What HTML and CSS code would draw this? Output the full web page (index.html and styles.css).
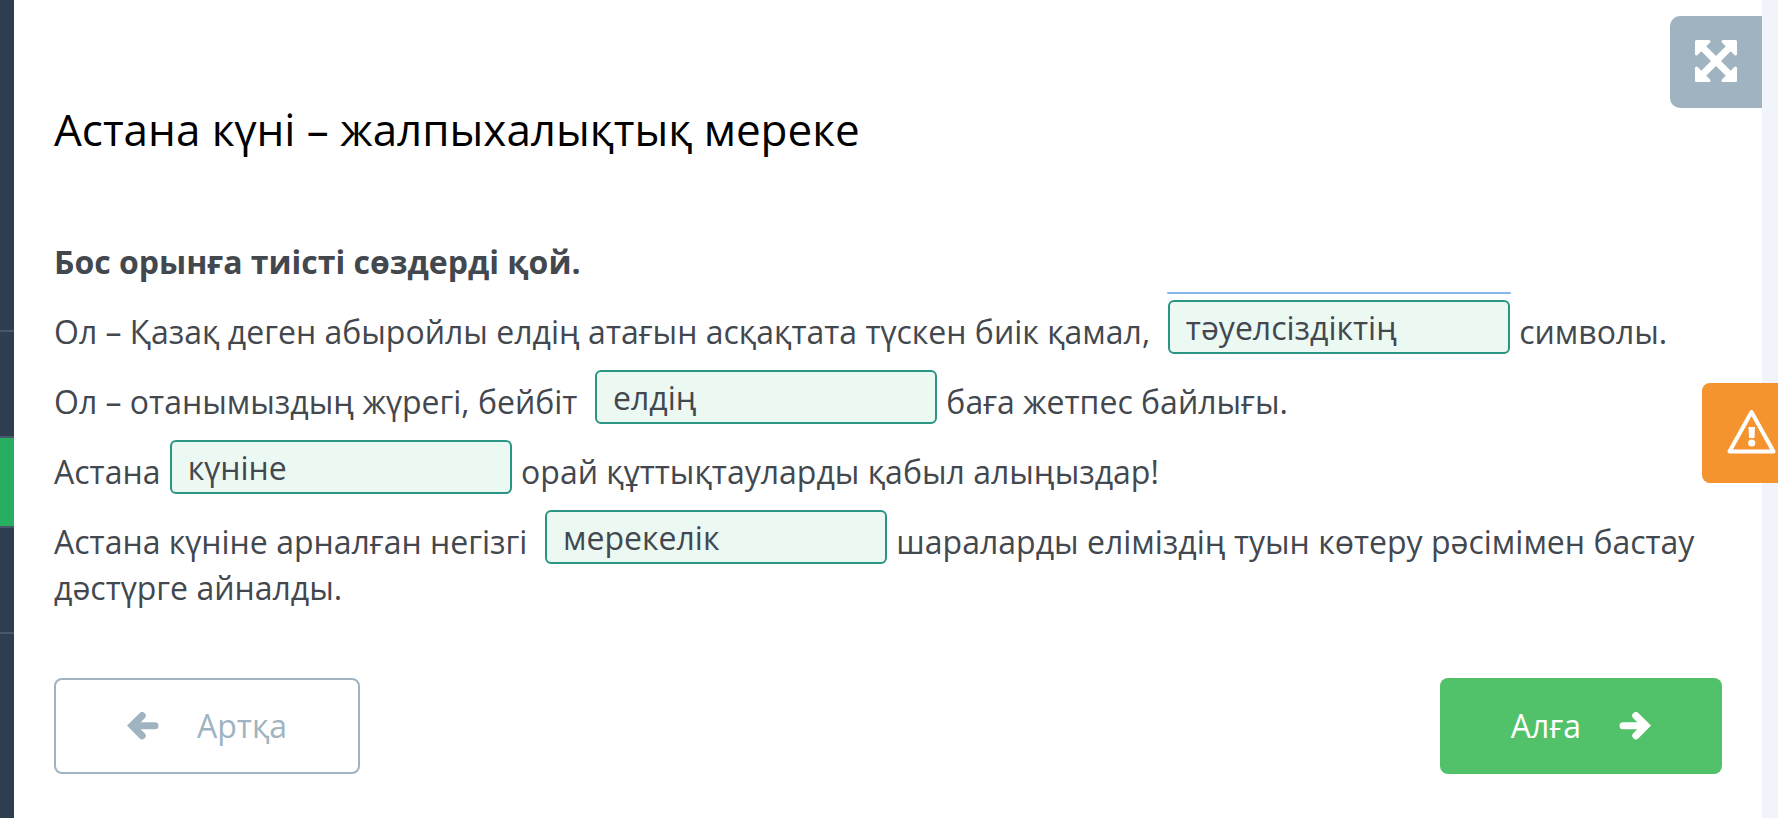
FILE: index.html
```html
<!DOCTYPE html>
<html lang="kk">
<head>
    <meta charset="UTF-8">
    <meta name="viewport" content="width=device-width, initial-scale=1.0">
    <title>Астана күні – жалпыхалықтық мереке</title>
    <link rel="stylesheet" href="styles.css">
</head>
<body>
    <aside class="sidebar">
        <div class="sidebar-item first"></div>
        <div class="sidebar-item"></div>
        <div class="sidebar-item active"></div>
        <div class="sidebar-item"></div>
    </aside>

    <main class="lesson">
        <button type="button" class="fullscreen-btn" aria-label="Толық экран">
            <svg width="42" height="42" viewBox="0 0 42 42">
                <path d="M8 8L34 34M34 8L8 34" stroke="currentColor" stroke-width="7"/>
                <path d="M1.500 1.500H14L1.500 14zM40.500 1.500H28L40.500 14zM1.500 40.500H14L1.500 28zM40.500 40.500H28L40.500 28z" fill="currentColor" stroke="currentColor" stroke-width="3" stroke-linejoin="round"/>
            </svg>
        </button>

        <h1>Астана күні – жалпыхалықтық мереке</h1>

        <form class="task" id="task">
            <p><strong>Бос орынға тиісті сөздерді қой.</strong></p>
            <p>Ол – Қазақ деген абыройлы елдің атағын асқақтата түскен биік қамал,&nbsp; <span class="blank open"><input type="text" aria-label="1-сөз" value="тәуелсіздіктің"></span> символы.</p>
            <p>Ол – отанымыздың жүрегі, бейбіт&nbsp; <span class="blank"><input type="text" aria-label="2-сөз" value="елдің"></span> баға жетпес байлығы.</p>
            <p>Астана <span class="blank"><input type="text" aria-label="3-сөз" value="күніне"></span> орай құттықтауларды қабыл алыңыздар!</p>
            <p>Астана күніне арналған негізгі&nbsp; <span class="blank"><input type="text" aria-label="4-сөз" value="мерекелік"></span> шараларды еліміздің туын көтеру рәсімімен бастау дәстүрге айналды.</p>
        </form>

        <div class="nav-buttons">
            <button type="button" class="nav-btn back">
                <svg width="32" height="28" viewBox="0 0 32 28">
                    <path d="M0 13.5L12.5 1.2a3.6 3.6 0 0 1 5.2 5l-4 4H28a3.5 3.5 0 0 1 0 7H13.7l4 4a3.6 3.6 0 0 1-5.2 5z"/>
                </svg>
                Артқа
            </button>
            <button type="button" class="nav-btn next">
                Алға
                <svg width="32" height="28" viewBox="0 0 32 28">
                    <path d="M32 13.5L19.5 1.2a3.6 3.6 0 0 0-5.2 5l4 4H4a3.5 3.5 0 0 0 0 7H18.3l-4 4a3.6 3.6 0 0 0 5.2 5z"/>
                </svg>
            </button>
        </div>
    </main>

    <button type="button" class="report-btn" aria-label="Қате туралы хабарлау">
        <svg width="49" height="46" viewBox="0 0 49 46">
            <path d="M24.5 3L46.500 42.500H2.500z" fill="none" stroke="currentColor" stroke-width="4" stroke-linejoin="round"/>
            <path d="M21.500 18H28L27.500 29H22z" fill="currentColor"/>
            <circle cx="24.700" cy="34" r="3.600" fill="currentColor"/>
        </svg>
    </button>
</body>
</html>
```

FILE: styles.css
```css
:root {
    --text-color: #43484f;
    --muted-color: #9fb4c0;
    --green: #51c269;
    --answer-border: #2a9583;
    --answer-bg: #ecf9f3;
}
* {
    box-sizing: border-box;
}
body {
    margin: 0;
    min-height: 100vh;
    display: flex;
    padding-right: 16px;
    background-color: #f1f4fa;
    color: var(--text-color);
    font-family: 'Open Sans', sans-serif;
    font-size: 32px;
    line-height: 46px;
}
.sidebar {
    width: 14px;
    flex-shrink: 0;
    background-color: #2c3e50;
}
.sidebar-item {
    height: 106px;
    border-bottom: 2px solid #46586a;
}
.sidebar-item.first {
    height: 332px;
}
.sidebar-item.active {
    height: 90px;
    background-color: #27ae60;
}
.lesson {
    position: relative;
    flex: 1;
    padding: 99px 40px 44px;
    background-color: #fff;
}
h1 {
    margin: 0 0 80px;
    color: #000;
    font-size: 44px;
    font-weight: 400;
    line-height: 60px;
}
.task p {
    margin: 0 0 24px;
}
.blank {
    position: relative;
}
.blank input {
    width: 342px;
    height: 54px;
    margin: -12px 1px 0;
    padding: 2px 16px 0;
    border: 2px solid var(--answer-border);
    border-radius: 6px;
    background-color: var(--answer-bg);
    color: var(--text-color);
    font: inherit;
    vertical-align: 4px;
}
/* edge of the answer list above the current blank */
.blank.open::before {
    content: "";
    position: absolute;
    left: 0;
    top: -18px;
    width: 100%;
    height: 2px;
    border-radius: 2px;
    background-color: #86b7ec;
}
button {
    border: none;
    font: inherit;
    cursor: pointer;
}
.fullscreen-btn {
    position: absolute;
    top: 16px;
    right: 0;
    width: 92px;
    height: 92px;
    padding: 0 0 2px;
    display: flex;
    align-items: center;
    justify-content: center;
    border-radius: 10px 0 0 10px;
    background-color: var(--muted-color);
    color: #fff;
}
.nav-buttons {
    display: flex;
    justify-content: space-between;
    margin-top: 67px;
}
.nav-btn {
    display: flex;
    align-items: center;
    gap: 38px;
    height: 96px;
    padding: 0 71px;
    border-radius: 8px;
}
.nav-btn svg {
    fill: currentColor;
}
.nav-btn.back {
    border: 2px solid var(--muted-color);
    background-color: #fff;
    color: var(--muted-color);
}
.nav-btn.next {
    background-color: var(--green);
    color: #fff;
}
.report-btn {
    position: fixed;
    top: 383px;
    right: 0;
    width: 76px;
    height: 100px;
    padding: 0 2px 2px 0;
    display: flex;
    align-items: center;
    justify-content: flex-end;
    border-radius: 8px 0 0 8px;
    background-color: #f5932f;
    color: #fff;
}
```
